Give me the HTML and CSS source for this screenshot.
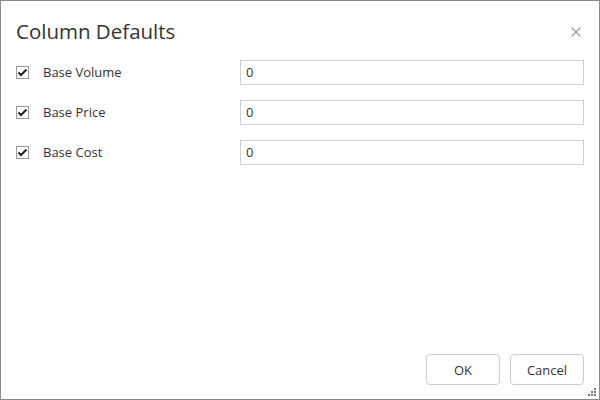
FILE: index.html
```html
<!DOCTYPE html>
<html>
<head>
<meta charset="utf-8">
<link rel="stylesheet" href="styles.css">
</head>
<body>
<div class="dialog">
  <div class="header">
    <div class="title">Column Defaults</div>
    <button class="close" aria-label="Close">
      <svg width="10" height="10" viewBox="0 0 10 10"><path d="M0.5 0.5L9.5 9.5M9.5 0.5L0.5 9.5" stroke="#9a9a9a" stroke-width="1.1" fill="none"/></svg>
    </button>
  </div>
  <div class="body">
    <div class="row">
      <label class="check"><span class="box"><svg width="11" height="9" viewBox="0 0 11 9"><path d="M1.5 4.5L4 7L9.5 1.5" stroke="#222" stroke-width="2" fill="none"/></svg></span><span class="label">Base Volume</span></label>
      <div class="input">0</div>
    </div>
    <div class="row">
      <label class="check"><span class="box"><svg width="11" height="9" viewBox="0 0 11 9"><path d="M1.5 4.5L4 7L9.5 1.5" stroke="#222" stroke-width="2" fill="none"/></svg></span><span class="label">Base Price</span></label>
      <div class="input">0</div>
    </div>
    <div class="row">
      <label class="check"><span class="box"><svg width="11" height="9" viewBox="0 0 11 9"><path d="M1.5 4.5L4 7L9.5 1.5" stroke="#222" stroke-width="2" fill="none"/></svg></span><span class="label">Base Cost</span></label>
      <div class="input">0</div>
    </div>
  </div>
  <div class="footer">
    <button class="btn">OK</button>
    <button class="btn">Cancel</button>
  </div>
  <svg class="grip" width="9" height="9" viewBox="0 0 9 9">
    <rect x="6" y="0" width="2" height="2" fill="#777"/>
    <rect x="3" y="3" width="2" height="2" fill="#777"/>
    <rect x="6" y="3" width="2" height="2" fill="#777"/>
    <rect x="0" y="6" width="2" height="2" fill="#777"/>
    <rect x="3" y="6" width="2" height="2" fill="#777"/>
    <rect x="6" y="6" width="2" height="2" fill="#777"/>
  </svg>
</div>
</body>
</html>
```
FILE: styles.css
```css
html, body {
  margin: 0;
  padding: 0;
  background: #fff;
}
body {
  font-family: "Open Sans", "Noto Sans", sans-serif;
  color: #333;
}
.dialog {
  position: relative;
  box-sizing: border-box;
  width: 600px;
  height: 400px;
  border: 1px solid #8a8a8a;
  display: flex;
  flex-direction: column;
}
.header {
  display: flex;
  align-items: center;
  justify-content: space-between;
  padding: 15px 18px 0 15px;
  height: 30px;
}
.title {
  font-size: 20.5px;
  color: #333;
}
.close {
  border: none;
  background: none;
  padding: 0;
  margin-top: 2px;
  width: 10px;
  height: 10px;
  display: flex;
}
.body {
  display: flex;
  flex-direction: column;
  gap: 15px;
  padding: 14px 15px 0 15px;
  flex: 1;
}
.row {
  display: flex;
  align-items: center;
  height: 25px;
}
.check {
  display: flex;
  align-items: center;
  width: 224px;
}
.box {
  box-sizing: border-box;
  width: 13px;
  height: 13px;
  border: 1px solid #999;
  display: flex;
  align-items: center;
  justify-content: center;
  margin-right: 14px;
}
.label {
  font-size: 13px;
  color: #333;
  margin-top: -2px;
}
.input {
  box-sizing: border-box;
  flex: 1;
  height: 25px;
  border: 1px solid #cfcfcf;
  font-size: 13px;
  line-height: 23px;
  padding-left: 5px;
  color: #333;
}
.footer {
  display: flex;
  justify-content: flex-end;
  gap: 10px;
  padding: 0 15px 14px 0;
}
.btn {
  box-sizing: border-box;
  width: 74px;
  height: 31px;
  border: 1px solid #cccccc;
  border-radius: 4px;
  background: #fff;
  font-family: "Open Sans", "Noto Sans", sans-serif;
  font-size: 13px;
  color: #333;
  padding: 0;
}
.grip {
  position: absolute;
  right: 2px;
  bottom: 2px;
}
```
